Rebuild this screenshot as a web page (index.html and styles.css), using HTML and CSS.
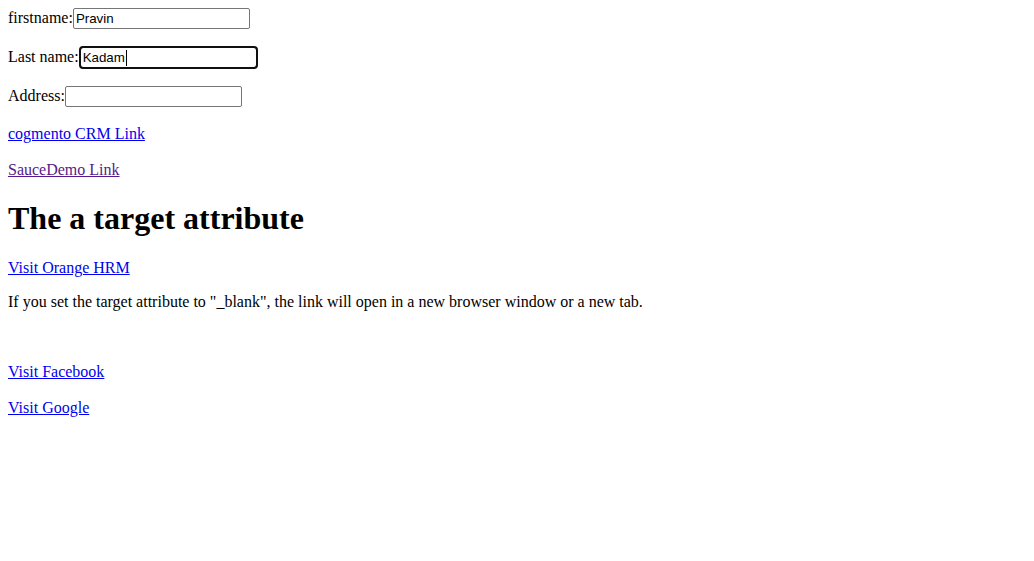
FILE: index.html
```html
<!DOCTYPE html>
<html>
<head>
<meta charset="utf-8">
<title>Links</title>
<link rel="stylesheet" href="styles.css">
</head>
<body class="page">
<div class="form-block">
firstname:<input class="field" type="text" value="Pravin"><br><br>
Last name:<span class="focus-wrap"><input class="field field-focused" type="text" value="Kadam"><span class="caret"></span></span><br><br>
Address:<input class="field" type="text" value=""><br><br>
<a class="link" href="#crm">cogmento CRM Link</a><br><br>
<a class="link link-visited" href="#sauce">SauceDemo Link</a>
</div>
<h1 class="title">The a target attribute</h1>
<p class="para"><a class="link" href="#orange">Visit Orange HRM</a></p>
<p class="para">If you set the target attribute to "_blank", the link will open in a new browser window or a new tab.</p>
<div class="links-block"><br><br><a class="link" href="#fb">Visit Facebook</a><br><br><a class="link" href="#google">Visit Google</a></div>
</body>
</html>
```
FILE: styles.css
```css
.page {
  margin: 8px;
  font-family: "Liberation Serif", "Times New Roman", serif;
  font-size: 16px;
  color: #000;
  background: #fff;
}
.field {
  box-sizing: border-box;
  font-family: "Liberation Sans", Arial, sans-serif;
  font-size: 13.3333px;
  color: #000;
  border: 1px solid #767676;
  border-radius: 2px;
  padding: 1px 2px;
  width: 177px;
  height: 21px;
  margin: 0;
  background: #fff;
  vertical-align: baseline;
}
.focus-wrap {
  position: relative;
  display: inline-block;
  margin-left: 1px;
}
.field-focused {
  outline: 2px solid #101010;
  outline-offset: -1px;
  border-radius: 3px;
}
.caret {
  position: absolute;
  left: 46px;
  top: 3px;
  width: 1px;
  height: 16px;
  background: #000;
}
.link {
  color: #0000ee;
  text-decoration: underline;
}
.link-visited {
  color: #551a8b;
}
.title {
  font-size: 2em;
  font-weight: bold;
  margin: 0.67em 0;
}
.para {
  margin: 16px 0;
}
```
